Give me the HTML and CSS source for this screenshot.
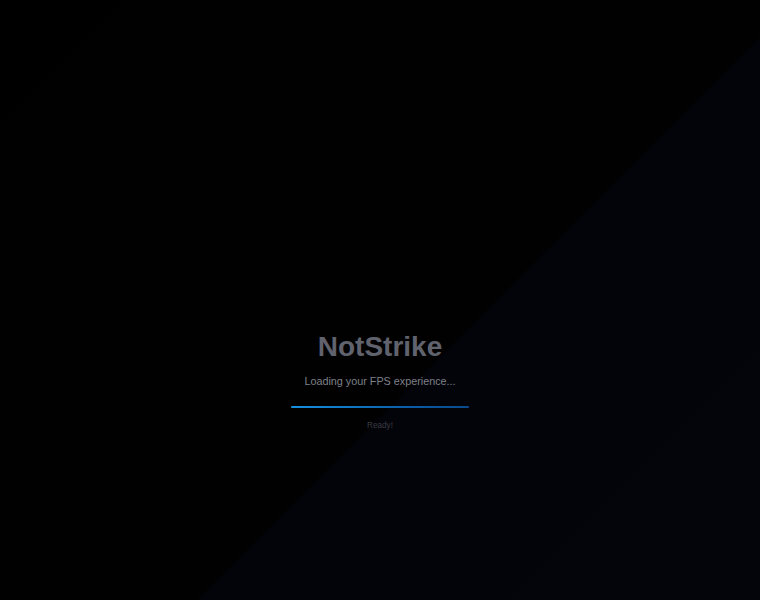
FILE: index.html
```html
<!DOCTYPE html>
<html lang="en">
<head>
<meta charset="utf-8">
<title>NotStrike</title>
<link rel="stylesheet" href="styles.css">
</head>
<body>
<div class="screen">
  <div class="loader">
    <h1 class="title">NotStrike</h1>
    <p class="subtitle">Loading your FPS experience...</p>
    <div class="bar"><div class="bar-fill"></div></div>
    <p class="status">Ready!</p>
  </div>
</div>
</body>
</html>
```
FILE: styles.css
```css
html, body {
  margin: 0;
  padding: 0;
  height: 100%;
}
body {
  font-family: "Liberation Sans", Arial, sans-serif;
  background: #000;
}
.screen {
  width: 760px;
  height: 600px;
  background: linear-gradient(135deg, #000000 0%, #010102 58.4%, #03030a 58.9%, #04050b 100%);
  display: flex;
  flex-direction: column;
  align-items: center;
  overflow: hidden;
}
.loader {
  padding-top: 331px;
  display: flex;
  flex-direction: column;
  align-items: center;
}
.title {
  margin: 0;
  font-size: 28px;
  line-height: 32px;
  font-weight: 700;
  color: #60626d;
}
.subtitle {
  margin: 11px 0 0;
  font-size: 10.8px;
  line-height: 14px;
  color: #7e8089;
}
.bar {
  margin-top: 18px;
  width: 178px;
  height: 2px;
  background: #0a1a2a;
  border-radius: 1px;
  overflow: hidden;
}
.bar-fill {
  width: 100%;
  height: 100%;
  background: linear-gradient(90deg, #1690e0, #0a5aa4 70%, #0a4a8c);
}
.status {
  margin: 12px 0 0;
  font-size: 8.2px;
  line-height: 11px;
  color: #3a3b43;
}
```
